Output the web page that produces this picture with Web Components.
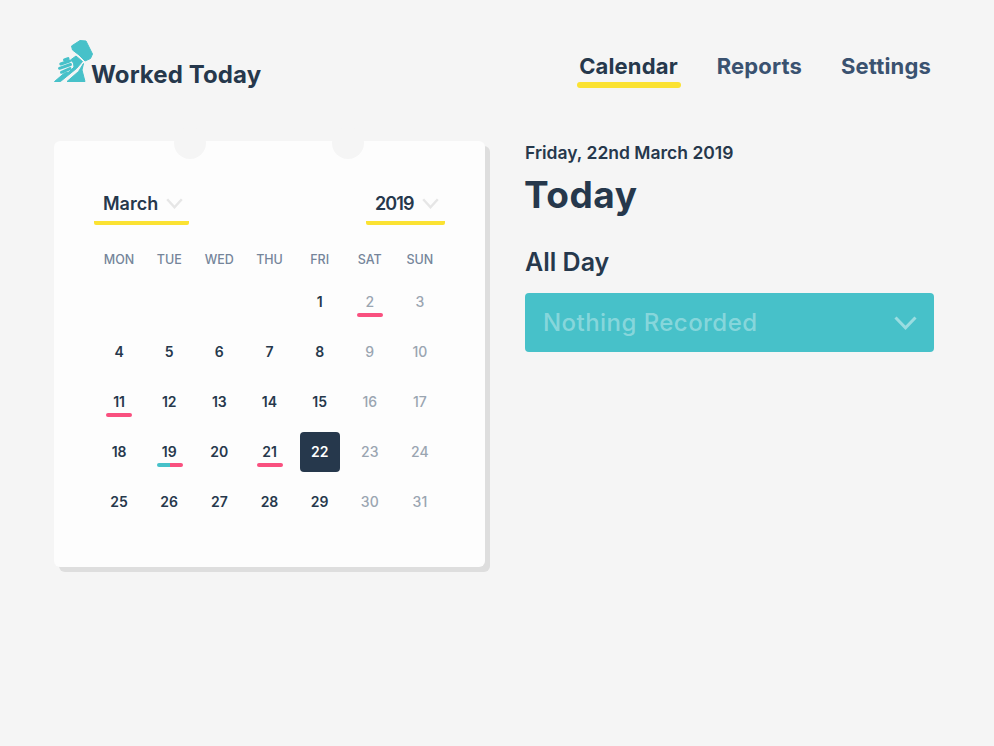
<!DOCTYPE html>
<html lang="en">
<head>
<meta charset="utf-8">
<title>Worked Today</title>
<style>
  html, body { margin: 0; height: 100%; background: #f5f5f5; }
  body { font-family: "Inter", "Liberation Sans", sans-serif; color: #26384c; }
</style>
</head>
<body>
<wt-app>
  <wt-header slot="header"></wt-header>
  <wt-calendar slot="calendar" month="March" year="2019"></wt-calendar>
  <wt-today slot="today" date="Friday, 22nd March 2019"></wt-today>
</wt-app>

<script>
const CHEVRON = (w, h, color, width) => `
  <svg width="${w}" height="${h}" viewBox="0 0 ${w} ${h}" fill="none" aria-hidden="true">
    <path d="M${width / 2} ${width / 2} L${w / 2} ${h - width / 1.4} L${w - width / 2} ${width / 2}" stroke="${color}" stroke-width="${width}"/>
  </svg>`;

class WtApp extends HTMLElement {
  connectedCallback() {
    this.attachShadow({ mode: 'open' });
    this.shadowRoot.innerHTML = `
      <style>
        :host { display: block; width: 994px; height: 746px; box-sizing: border-box; padding: 40px 60px 0 54px; }
        main { display: flex; gap: 40px; margin-top: 57px; }
      </style>
      <slot name="header"></slot>
      <main>
        <slot name="calendar"></slot>
        <slot name="today"></slot>
      </main>
    `;
  }
}

class WtHeader extends HTMLElement {
  connectedCallback() {
    this.attachShadow({ mode: 'open' });
    this.shadowRoot.innerHTML = `
      <style>
        :host { display: flex; justify-content: space-between; align-items: flex-start; height: 44px; }
        .brand { display: flex; align-items: flex-end; height: 44px; }
        .brand svg { display: block; flex: none; }
        .name { font-size: 24px; font-weight: 700; letter-spacing: .1px; line-height: 24px; color: #26384c; margin: 0 0 -3px -3px; }
        nav { display: flex; gap: 39px; margin: 12px 3px 0 0; }
      </style>
      <div class="brand">
        <svg width="40" height="44" viewBox="54 40 40 44" fill="#47c1c9" aria-hidden="true">
          <g stroke="#47c1c9" stroke-width="1" stroke-linejoin="round">
            <path d="M71.5 46 L80 40.5 L86 41 L92.5 54 L90.5 58.5 L85 61 L79 55 L72.5 50 Z"/>
            <path d="M70.5 60 L76 56 L82.5 61.5 L76.5 68.5 L60.5 81.5 H54.5 L64.5 73 L69 72 L74 67 L73.5 63 Z"/>
            <path d="M67 81.5 L78.5 71.5 L83.5 63.5 L82 70 L85 81.5 Z"/>
          </g>
          <g stroke="#47c1c9" stroke-width="3" stroke-linecap="round">
            <line x1="64.5" y1="60" x2="68" y2="58.6"/>
            <line x1="60.8" y1="64" x2="69.5" y2="61"/>
            <line x1="59.5" y1="68.3" x2="70.5" y2="64.5"/>
            <line x1="61.5" y1="72.3" x2="70" y2="68.6"/>
          </g>
        </svg>
        <span class="name">Worked Today</span>
      </div>
      <nav>
        <wt-nav-link active>Calendar</wt-nav-link>
        <wt-nav-link>Reports</wt-nav-link>
        <wt-nav-link>Settings</wt-nav-link>
      </nav>
    `;
  }
}

class WtNavLink extends HTMLElement {
  connectedCallback() {
    this.attachShadow({ mode: 'open' });
    this.shadowRoot.innerHTML = `
      <style>
        :host { display: block; position: relative; font-size: 22px; font-weight: 700; letter-spacing: .15px; line-height: 28px; color: #3a5270; }
        :host([active]) { color: #26384c; }
        :host([active])::after {
          content: ''; position: absolute; left: -2px; right: -3px; top: 30px; height: 6px;
          border-radius: 3px; background: #fbe232;
        }
      </style>
      <slot></slot>
    `;
  }
}

class WtSelect extends HTMLElement {
  connectedCallback() {
    this.attachShadow({ mode: 'open' });
    this.shadowRoot.innerHTML = `
      <style>
        :host { display: flex; align-items: center; box-sizing: border-box; height: 44px; padding: 5px 6px 0 9px;
          border-bottom: 4px solid #fbe232; border-radius: 0 0 2px 2px; font-size: 18px; font-weight: 600; color: #26384c; }
        span { flex: 1; }
        svg { display: block; }
      </style>
      <span><slot></slot></span>
      ${CHEVRON(17, 11, '#e6e6e6', 2.4)}
    `;
  }
}

class WtDay extends HTMLElement {
  connectedCallback() {
    const marks = (this.getAttribute('marks') || '').split(' ').filter(Boolean);
    this.attachShadow({ mode: 'open' });
    this.shadowRoot.innerHTML = `
      <style>
        :host { display: flex; align-items: center; justify-content: center; position: relative; box-sizing: border-box; height: 50px;
          padding-bottom: 2px; font-size: 14px; font-weight: 600; color: #26384c; }
        :host([muted]) { color: #9aa5b1; font-weight: 500; }
        :host([selected]) { color: #fff; }
        :host([selected])::before {
          content: ''; position: absolute; left: 50%; margin-left: -20px; top: 5px; width: 40px; height: 40px;
          border-radius: 4px; background: #26384c;
        }
        span { position: relative; }
        .marks { display: flex; position: absolute; left: 50%; margin-left: -12.7px; top: 36px; width: 26px; height: 4px; border-radius: 2px; overflow: hidden; }
        .marks i { flex: 1; }
        .pink { background: #f9507f; }
        .teal { background: #47c1c9; }
      </style>
      <span><slot></slot></span>
      ${marks.length ? `<div class="marks">${marks.map(m => `<i class="${m}"></i>`).join('')}</div>` : ''}
    `;
  }
}

class WtCalendar extends HTMLElement {
  connectedCallback() {
    const month = this.getAttribute('month');
    const year = this.getAttribute('year');
    const marks = { 2: 'pink', 11: 'pink', 19: 'teal pink', 21: 'pink' };
    const muted = [2, 3, 9, 10, 16, 17, 23, 24, 30, 31];
    const blanks = '<i></i>'.repeat(4);
    let days = '';
    for (let d = 1; d <= 31; d++) {
      days += `<wt-day${muted.includes(d) ? ' muted' : ''}${d === 22 ? ' selected' : ''}${marks[d] ? ` marks="${marks[d]}"` : ''}>${d}</wt-day>`;
    }
    const names = ['MON', 'TUE', 'WED', 'THU', 'FRI', 'SAT', 'SUN'].map(n => `<div>${n}</div>`).join('');
    this.attachShadow({ mode: 'open' });
    this.shadowRoot.innerHTML = `
      <style>
        :host { display: block; position: relative; flex: none; box-sizing: border-box; width: 431px; height: 426px;
          padding: 40px; background: #fdfdfd; border-radius: 6px; box-shadow: 5px 5px 0 #dedede; }
        .notch { position: absolute; top: -14px; width: 32px; height: 32px; border-radius: 50%; background: #f5f5f5; }
        .n1 { left: 120px; }
        .n2 { left: 278px; }
        .selects { display: flex; justify-content: space-between; }
        .month { width: 95px; }
        .year { width: 79px; letter-spacing: -.9px; }
        .names, .grid { display: grid; grid-template-columns: repeat(7, 1fr); width: 351px; }
        .names { height: 34px; margin-top: 18px; align-items: center; padding-bottom: 1px; box-sizing: border-box;
          text-align: center; font-size: 12.5px; font-weight: 500; color: #75859a; }
      </style>
      <div class="notch n1"></div>
      <div class="notch n2"></div>
      <div class="selects">
        <wt-select class="month">${month}</wt-select>
        <wt-select class="year">${year}</wt-select>
      </div>
      <div class="names">${names}</div>
      <div class="grid">${blanks}${days}</div>
    `;
  }
}

class WtDropdown extends HTMLElement {
  connectedCallback() {
    this.attachShadow({ mode: 'open' });
    this.shadowRoot.innerHTML = `
      <style>
        :host { display: flex; align-items: center; justify-content: space-between; box-sizing: border-box; height: 59px;
          padding: 0 17px 0 18px; background: #47c1c9; border-radius: 4px; font-size: 24px; font-weight: 500;
          letter-spacing: .45px; color: rgba(255,255,255,.36); }
        svg { display: block; }
      </style>
      <span><slot></slot></span>
      ${CHEVRON(23, 14, 'rgba(255,255,255,.45)', 3)}
    `;
  }
}

class WtToday extends HTMLElement {
  connectedCallback() {
    this.attachShadow({ mode: 'open' });
    this.shadowRoot.innerHTML = `
      <style>
        :host { display: block; width: 409px; color: #26384c; }
        .date { font-size: 17.5px; font-weight: 600; line-height: 24px; }
        h1 { margin: 8px 0 0 -1px; font-size: 37px; font-weight: 700; line-height: 44px; letter-spacing: .5px; }
        h2 { margin: 30px 0 0; font-size: 25px; font-weight: 600; line-height: 30px; }
        wt-dropdown { margin-top: 16px; }
      </style>
      <div class="date">${this.getAttribute('date')}</div>
      <h1>Today</h1>
      <h2>All Day</h2>
      <wt-dropdown>Nothing Recorded</wt-dropdown>
    `;
  }
}

customElements.define('wt-app', WtApp);
customElements.define('wt-header', WtHeader);
customElements.define('wt-nav-link', WtNavLink);
customElements.define('wt-select', WtSelect);
customElements.define('wt-day', WtDay);
customElements.define('wt-calendar', WtCalendar);
customElements.define('wt-dropdown', WtDropdown);
customElements.define('wt-today', WtToday);
</script>
</body>
</html>
